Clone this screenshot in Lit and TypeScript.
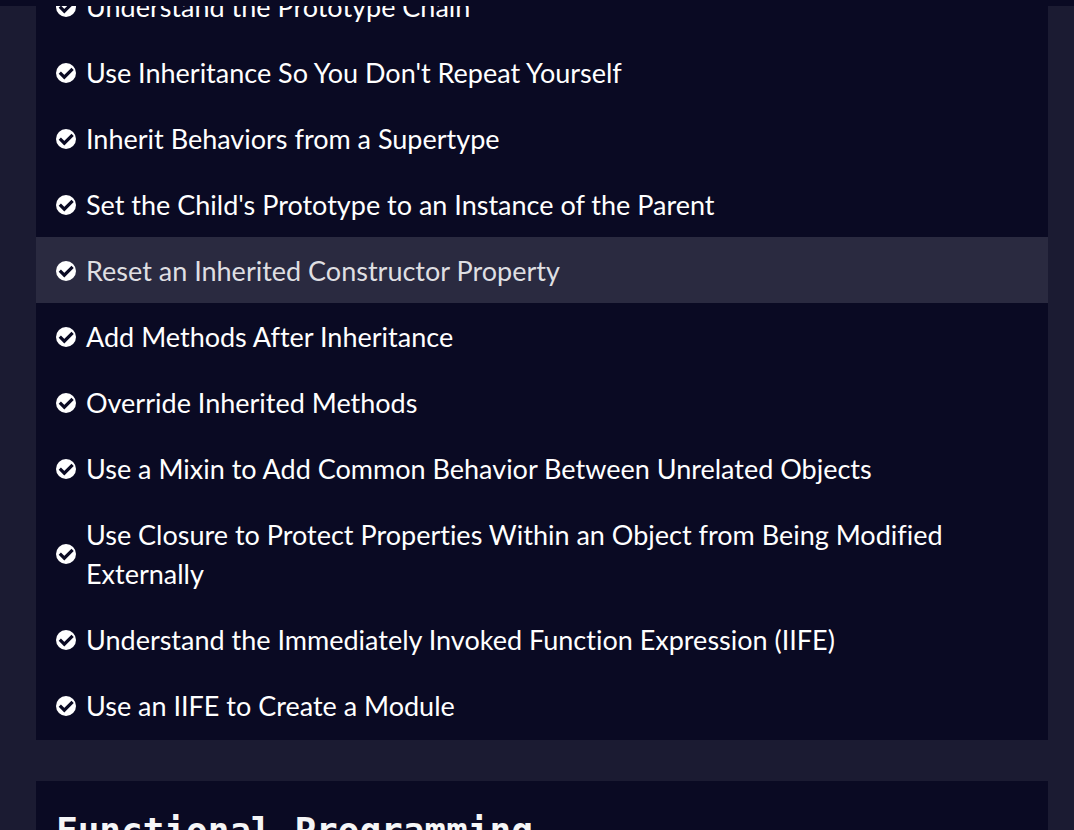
import { LitElement, html, css, svg } from "lit";
import { customElement, property } from "lit/decorators.js";
import { classMap } from "lit/directives/class-map.js";

interface Lesson {
  title: string;
  active?: boolean;
}

const lessons: Lesson[] = [
  { title: "Understand the Prototype Chain" },
  { title: "Use Inheritance So You Don't Repeat Yourself" },
  { title: "Inherit Behaviors from a Supertype" },
  { title: "Set the Child's Prototype to an Instance of the Parent" },
  { title: "Reset an Inherited Constructor Property", active: true },
  { title: "Add Methods After Inheritance" },
  { title: "Override Inherited Methods" },
  { title: "Use a Mixin to Add Common Behavior Between Unrelated Objects" },
  { title: "Use Closure to Protect Properties Within an Object from Being Modified Externally" },
  { title: "Understand the Immediately Invoked Function Expression (IIFE)" },
  { title: "Use an IIFE to Create a Module" },
];

const passedIcon = svg`
  <circle cx="10" cy="10" r="10" fill="#ffffff"></circle>
  <path d="M3.8 9.7 L8.3 14.2 L16.6 5.9" fill="none" stroke="#0a0a23" stroke-width="3.2"></path>`;

@customElement("lesson-link")
export class LessonLink extends LitElement {
  @property() title = "";
  @property({ type: Boolean }) active = false;

  static styles = css`
    :host {
      display: block;
    }
    .row {
      display: flex;
      align-items: center;
      gap: 10px;
      padding: 14px 20px 13px;
      color: #ffffff;
      text-decoration: none;
      line-height: 39px;
    }
    .row.active {
      background: #2a2a40;
      color: #dfdfe2;
    }
    .icon {
      flex: none;
      width: 20px;
      height: 20px;
    }
  `;

  render() {
    return html`<a class=${classMap({ row: true, active: this.active })} href="#"
      ><svg class="icon" viewBox="0 0 20 20" aria-hidden="true">${passedIcon}</svg
      ><span>${this.title}</span></a
    >`;
  }
}

@customElement("app-root")
export class AppRoot extends LitElement {
  static styles = css`
    :host {
      display: flex;
      flex-direction: column;
      height: 100vh;
      overflow: hidden;
      background: #1b1b32;
      font-family: Lato, sans-serif;
      font-size: 27px;
      font-variant-ligatures: no-common-ligatures;
    }
    .topbar {
      flex: none;
      height: 6px;
      background: #0a0a23;
    }
    .content {
      flex: 1;
      min-height: 0;
      overflow: hidden;
      padding: 0 26px 0 36px;
    }
    .block {
      background: #0a0a23;
      margin-bottom: 41px;
    }
    .lessons {
      list-style: none;
      margin: 0;
      padding: 0 0 2px;
    }
    .scrolled {
      margin-top: -33px;
    }
    .heading {
      margin: 0;
      padding: 28px 20px;
      color: #f5f6f7;
      font: bold 36px/44px "DejaVu Sans Mono", monospace;
    }
  `;

  render() {
    return html`
      <header class="topbar"></header>
      <main class="content">
        <section class="block scrolled">
          <ul class="lessons">
            ${lessons.map(
              (l) => html`<li><lesson-link .title=${l.title} .active=${!!l.active}></lesson-link></li>`
            )}
          </ul>
        </section>
        <section class="block">
          <h2 class="heading">Functional Programming</h2>
        </section>
      </main>
    `;
  }
}
